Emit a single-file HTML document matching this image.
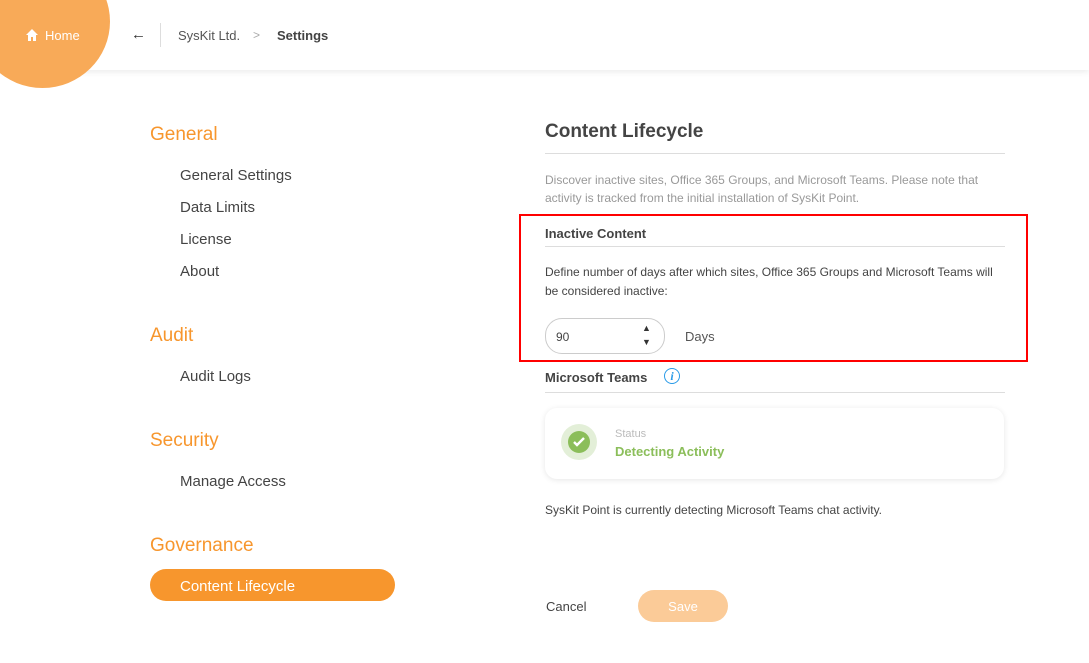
<!DOCTYPE html>
<html><head><meta charset="utf-8"><style>
body{margin:0;width:1089px;height:663px;overflow:hidden;background:#fff;font-family:"Liberation Sans",sans-serif;position:relative;color:#333}
.a{position:absolute}
.hdr{left:0;top:0;width:1089px;height:70px;background:#fff;box-shadow:0 2px 6px rgba(0,0,0,0.08)}
.sec{font-size:19px;color:#f7962d;left:150px}
.it{font-size:15px;color:#444;left:180px}
.sm{font-size:12px}
</style></head><body>
<div class="a hdr"></div>
<div class="a" style="left:-25px;top:-45px;width:135px;height:133px;border-radius:50%;background:#f8aa58"></div>
<svg class="a" style="left:25px;top:28px" width="14" height="14" viewBox="0 0 14 14"><path d="M7 1L1 7h2v6h3V9h2v4h3V7h2z" fill="#fff"/></svg>
<div class="a" style="left:45px;top:28px;color:#fff;font-size:13px">Home</div>
<div class="a" style="left:131px;top:26px;font-size:15px;color:#333">&#8592;</div>
<div class="a" style="left:160px;top:23px;width:1px;height:24px;background:#ddd"></div>
<div class="a" style="left:178px;top:28px;font-size:13px;color:#555">SysKit Ltd.</div>
<div class="a" style="left:253px;top:28px;font-size:12px;color:#aaa">&gt;</div>
<div class="a" style="left:277px;top:28px;font-size:13px;font-weight:bold;color:#444">Settings</div>

<div class="a sec" style="top:124px">General</div>
<div class="a it" style="top:167px">General Settings</div>
<div class="a it" style="top:199px">Data Limits</div>
<div class="a it" style="top:231px">License</div>
<div class="a it" style="top:263px">About</div>
<div class="a sec" style="top:325px">Audit</div>
<div class="a it" style="top:368px">Audit Logs</div>
<div class="a sec" style="top:430px">Security</div>
<div class="a it" style="top:473px">Manage Access</div>
<div class="a sec" style="top:535px">Governance</div>
<div class="a" style="left:150px;top:569px;width:245px;height:32px;border-radius:16px;background:#f7962d"></div>
<div class="a it" style="top:578px;color:#fff">Content Lifecycle</div>

<div class="a" style="left:545px;top:121px;font-size:19px;font-weight:bold;color:#444">Content Lifecycle</div>
<div class="a" style="left:545px;top:153px;width:460px;height:1px;background:#ddd"></div>
<div class="a sm" style="left:545px;top:171px;width:465px;color:#999;line-height:18px">Discover inactive sites, Office 365 Groups, and Microsoft Teams. Please note that activity is tracked from the initial installation of SysKit Point.</div>
<div class="a" style="left:519px;top:214px;width:505px;height:144px;border:2px solid #f00"></div>
<div class="a" style="left:545px;top:226px;font-size:13px;font-weight:bold;color:#444">Inactive Content</div>
<div class="a" style="left:545px;top:246px;width:460px;height:1px;background:#ddd"></div>
<div class="a sm" style="left:545px;top:263px;width:450px;color:#444;line-height:19px">Define number of days after which sites, Office 365 Groups and Microsoft Teams will be considered inactive:</div>
<div class="a" style="left:545px;top:318px;width:118px;height:34px;border:1px solid #ccc;border-radius:17px"></div>
<div class="a sm" style="left:556px;top:330px;color:#444">90</div>
<div class="a" style="left:642px;top:321px;font-size:9px;color:#333;line-height:14px">&#9650;<br>&#9660;</div>
<div class="a" style="left:685px;top:329px;font-size:13px;color:#555">Days</div>
<div class="a" style="left:545px;top:370px;font-size:13px;font-weight:bold;color:#444">Microsoft Teams</div>
<div class="a" style="left:664px;top:368px;width:14px;height:14px;border:1.5px solid #2a9be8;border-radius:50%;color:#2a9be8;font-size:12px;font-style:italic;font-weight:bold;text-align:center;line-height:14px;font-family:'Liberation Serif',serif">i</div>
<div class="a" style="left:545px;top:392px;width:460px;height:1px;background:#ddd"></div>
<div class="a" style="left:545px;top:408px;width:459px;height:71px;border-radius:12px;box-shadow:0 1px 6px rgba(0,0,0,0.1)"></div>
<div class="a" style="left:561px;top:424px;width:36px;height:36px;border-radius:50%;background:#e3efd8"></div>
<div class="a" style="left:568px;top:431px;width:22px;height:22px;border-radius:50%;background:#8bbe5a"></div>
<svg class="a" style="left:572px;top:435px" width="14" height="14" viewBox="0 0 14 14"><path d="M2 7l3 3 7-7" stroke="#fff" stroke-width="2.4" fill="none"/></svg>
<div class="a" style="left:615px;top:428px;font-size:11px;color:#bbb">Status</div>
<div class="a" style="left:615px;top:444px;font-size:13px;font-weight:bold;color:#8bbe5a">Detecting Activity</div>
<div class="a sm" style="left:545px;top:503px;color:#444">SysKit Point is currently detecting Microsoft Teams chat activity.</div>
<div class="a" style="left:546px;top:599px;font-size:13px;color:#444">Cancel</div>
<div class="a" style="left:638px;top:590px;width:90px;height:32px;border-radius:16px;background:#fbcb98;color:#fff;font-size:13px;text-align:center;line-height:33px">Save</div>
</body></html>
